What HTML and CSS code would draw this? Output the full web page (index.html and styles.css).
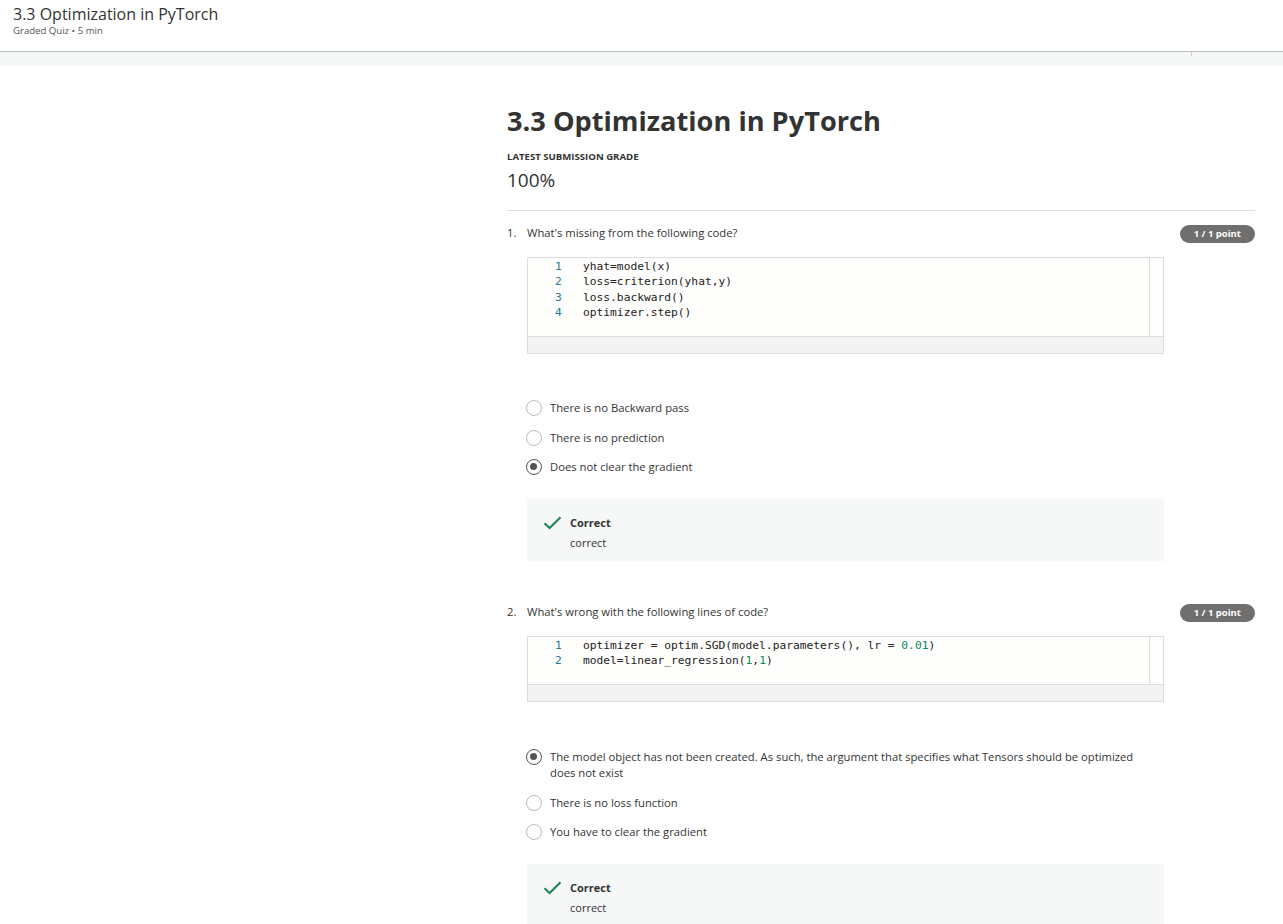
FILE: index.html
```html
<!DOCTYPE html>
<html>
<head>
<meta charset="utf-8">
<link rel="stylesheet" href="styles.css">
</head>
<body>
<header class="topbar">
  <div class="top-title">3.3 Optimization in PyTorch</div>
  <div class="top-sub">Graded Quiz • 5 min</div>
</header>
<div class="strip"><span class="tick"></span></div>
<main class="content">
  <h1 class="page-title">3.3 Optimization in PyTorch</h1>
  <div class="grade-label">LATEST SUBMISSION GRADE</div>
  <div class="grade">100%</div>
  <div class="divider"></div>

  <section class="question">
    <div class="q-head">
      <div class="q-text"><span class="q-num">1.</span>What's missing from the following code?</div>
      <span class="badge">1 / 1 point</span>
    </div>
    <div class="code-box">
      <div class="code-main">
        <div class="code-lines">
          <div class="cl"><span class="ln">1</span><span>yhat=model(x)</span></div>
          <div class="cl"><span class="ln">2</span><span>loss=criterion(yhat,y)</span></div>
          <div class="cl"><span class="ln">3</span><span>loss.backward()</span></div>
          <div class="cl"><span class="ln">4</span><span>optimizer.step()</span></div>
        </div>
        <div class="vscroll"></div>
      </div>
      <div class="hscroll"></div>
    </div>
    <div class="options opts1">
      <div class="opt"><span class="radio"></span><span class="opt-text">There is no Backward pass</span></div>
      <div class="opt"><span class="radio"></span><span class="opt-text">There is no prediction</span></div>
      <div class="opt"><span class="radio checked"></span><span class="opt-text">Does not clear the gradient</span></div>
    </div>
    <div class="feedback">
      <svg class="check" width="19" height="14" viewBox="0 0 19 14"><path d="M1.5 7.2 L6.6 12 L17.5 1.3" fill="none" stroke="#1f8354" stroke-width="2"/></svg>
      <div>
        <div class="fb-title">Correct</div>
        <div class="fb-text">correct</div>
      </div>
    </div>
  </section>

  <section class="question q2">
    <div class="q-head">
      <div class="q-text"><span class="q-num">2.</span>What's wrong with the following lines of code?</div>
      <span class="badge">1 / 1 point</span>
    </div>
    <div class="code-box">
      <div class="code-main short">
        <div class="code-lines">
          <div class="cl"><span class="ln">1</span><span>optimizer = optim.SGD(model.parameters(), lr = <span class="num">0.01</span>)</span></div>
          <div class="cl"><span class="ln">2</span><span>model=linear_regression(<span class="num">1</span>,<span class="num">1</span>)</span></div>
        </div>
        <div class="vscroll"></div>
      </div>
      <div class="hscroll"></div>
    </div>
    <div class="options opts2">
      <div class="opt"><span class="radio checked"></span><span class="opt-text">The model object has not been created. As such, the argument that specifies what Tensors should be optimized does not exist</span></div>
      <div class="opt"><span class="radio"></span><span class="opt-text">There is no loss function</span></div>
      <div class="opt"><span class="radio"></span><span class="opt-text">You have to clear the gradient</span></div>
    </div>
    <div class="feedback">
      <svg class="check" width="19" height="14" viewBox="0 0 19 14"><path d="M1.5 7.2 L6.6 12 L17.5 1.3" fill="none" stroke="#1f8354" stroke-width="2"/></svg>
      <div>
        <div class="fb-title">Correct</div>
        <div class="fb-text">correct</div>
      </div>
    </div>
  </section>
</main>
</body>
</html>
```

FILE: styles.css
```css
* { box-sizing: border-box; }
html, body { margin: 0; padding: 0; }
body {
  font-family: "Open Sans", "Liberation Sans", sans-serif;
  color: #333;
  background: #fff;
  width: 1283px;
  height: 924px;
  overflow: hidden;
}
.topbar {
  height: 52px;
  padding: 4px 0 0 13px;
  border-bottom: 1px solid #bdbdbd;
}
.top-title {
  font-size: 16px;
  line-height: 20px;
  color: #333;
}
.top-sub {
  font-size: 9.6px;
  line-height: 14px;
  margin-top: 0;
  color: #555;
}
.strip {
  height: 14px;
  background: #f3f8f6;
  position: relative;
}
.tick {
  position: absolute;
  left: 1191px;
  top: 0;
  width: 1px;
  height: 4px;
  background: #cfcfcf;
}
.content {
  padding: 38px 28px 0 507px;
}
.page-title {
  margin: 0;
  font-size: 27.2px;
  line-height: 34px;
  font-weight: 700;
  color: #333;
}
.grade-label {
  margin-top: 13px;
  font-size: 9.6px;
  font-weight: 700;
  line-height: 12px;
  color: #333;
}
.grade {
  margin-top: 6px;
  font-size: 19px;
  line-height: 22px;
  color: #333;
}
.divider {
  margin-top: 19px;
  height: 1px;
  background: #e0e0e0;
}
.question { padding-top: 15px; }
.q2 { padding-top: 44px; }
.q-head {
  display: flex;
  justify-content: space-between;
  align-items: flex-start;
  height: 31px;
}
.q-text {
  font-size: 11.25px;
  line-height: 14px;
  color: #333;
}
.q-num { display: inline-block; width: 20px; }
.badge {
  margin-top: -1px;
  background: #6f6f6f;
  color: #fff;
  font-size: 9.5px;
  font-weight: 700;
  line-height: 18px;
  height: 18px;
  padding: 0 14px;
  border-radius: 9px;
  white-space: nowrap;
}
.code-box {
  margin-left: 20px;
  width: 637px;
  border: 1px solid #dcdcdc;
  background: #f3f3f3;
}
.code-main {
  display: flex;
  height: 79px;
  background: #fefefc;
  border-bottom: 1px solid #dcdcdc;
}
.code-main.short { height: 48px; }
.code-lines {
  flex: 1;
  padding-top: 1px;
  font-family: "DejaVu Sans Mono", "Liberation Mono", monospace;
  font-size: 11.25px;
  line-height: 15.4px;
  color: #222;
}
.cl { display: flex; white-space: pre; }
.ln {
  width: 55px;
  padding-left: 27px;
  color: #237893;
}
.num { color: #09885a; }
.vscroll {
  width: 14px;
  border-left: 1px solid #dcdcdc;
  background: #fefefc;
}
.hscroll { height: 16px; }
.options { display: flex; flex-direction: column; gap: 13.5px; }
.opts1 { padding-top: 46px; }
.opts2 { padding-top: 47px; }
.opt {
  display: flex;
  align-items: flex-start;
  font-size: 11.25px;
  line-height: 16px;
  color: #333;
}
.opt-text { max-width: 590px; }
.radio {
  width: 16px;
  height: 16px;
  border: 1.5px solid #bbb;
  border-radius: 50%;
  margin: 0 8px 0 19px;
  flex: none;
  position: relative;
  background: #fff;
}
.radio.checked { border-color: #555; }
.radio.checked::after {
  content: "";
  position: absolute;
  left: 3px; top: 3px;
  width: 7px; height: 7px;
  border-radius: 50%;
  background: #555;
}
.feedback {
  margin: 24px 0 0 20px;
  width: 637px;
  height: 62px;
  background: #f5f8f7;
  display: flex;
  align-items: flex-start;
  padding: 17px 0 0 16px;
}
.check { margin-right: 8px; margin-top: 0; flex: none; }
.fb-title { font-size: 11px; font-weight: 700; line-height: 14px; color: #333; }
.fb-text { font-size: 11px; line-height: 14px; margin-top: 6px; color: #333; }
```
